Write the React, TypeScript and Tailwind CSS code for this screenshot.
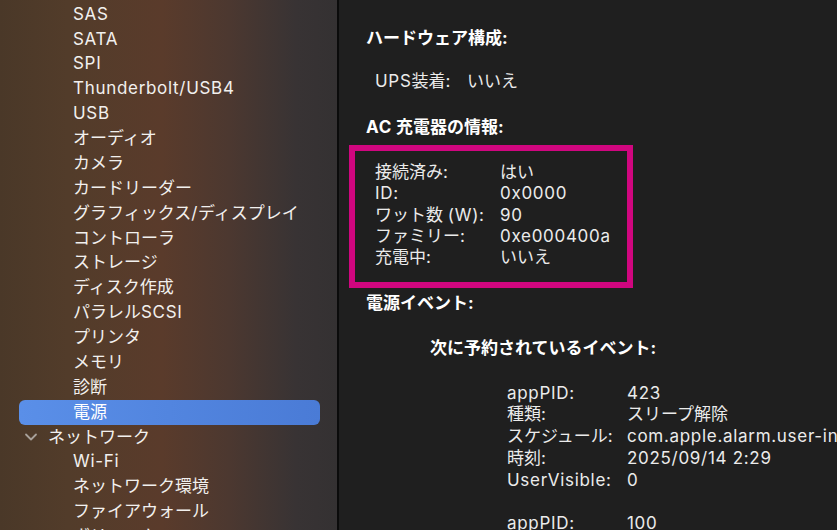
import React from "react";

const sidebarItems = [
  "SAS",
  "SATA",
  "SPI",
  "Thunderbolt/USB4",
  "USB",
  "オーディオ",
  "カメラ",
  "カードリーダー",
  "グラフィックス/ディスプレイ",
  "コントローラ",
  "ストレージ",
  "ディスク作成",
  "パラレルSCSI",
  "プリンタ",
  "メモリ",
  "診断",
];

const networkItems = ["Wi-Fi", "ネットワーク環境", "ファイアウォール", "ボリューム"];

const charger = [
  ["接続済み:", "はい"],
  ["ID:", "0x0000"],
  ["ワット数 (W):", "90"],
  ["ファミリー:", "0xe000400a"],
  ["充電中:", "いいえ"],
];

const event1 = [
  ["appPID:", "423"],
  ["種類:", "スリープ解除"],
  ["スケジュール:", "com.apple.alarm.user-invisible-com.apple.acmonitor"],
  ["時刻:", "2025/09/14 2:29"],
  ["UserVisible:", "0"],
];

// latin runs are set a touch wider so they match the SF widths of the shot
function T({ text }: { text: string }) {
  const parts = text.split(/([\x21-\x7e]+(?: [\x21-\x7e]+)*)/).filter(Boolean);
  return (
    <>
      {parts.map((p, i) =>
        /^[\x21-\x7e]/.test(p) ? (
          <span key={i} className="tracking-[0.7px]">
            {p}
          </span>
        ) : (
          <span key={i}>{p}</span>
        ),
      )}
    </>
  );
}

function Chevron() {
  return (
    <svg width="14" height="10" viewBox="0 0 14 10" className="shrink-0">
      <polyline
        points="2,2.5 7,7.5 12,2.5"
        fill="none"
        stroke="#a8a19a"
        strokeWidth="1.8"
        strokeLinecap="round"
        strokeLinejoin="round"
      />
    </svg>
  );
}

export default function App() {
  return (
    <div className="flex h-[530px] w-[837px] overflow-hidden font-['Inter','Noto_Sans_CJK_JP',sans-serif] text-[17px]">
      {/* sidebar */}
      <aside className="w-[337px] shrink-0 bg-[linear-gradient(90deg,#4a3828_0%,#523c2a_20%,#5a3b2b_48%,#4c3830_68%,#383334_88%,#343132_100%)] pt-[2px] text-[#f2f0ee]">
        {sidebarItems.map((item) => (
          <div key={item} className="flex h-[24.875px] items-center pl-[73px]">
            <T text={item} />
          </div>
        ))}
        <div className="ml-[19px] mr-[17px] flex h-[24.875px] items-center rounded-[6px] bg-[linear-gradient(90deg,#5a8fe8,#4a7bd6)] pl-[54px] text-white">
          電源
        </div>
        <div className="flex h-[24.875px] items-center gap-[10px] pl-[24px]">
          <Chevron />
          <span>ネットワーク</span>
        </div>
        {networkItems.map((item) => (
          <div key={item} className="flex h-[24.875px] items-center pl-[73px]">
            <T text={item} />
          </div>
        ))}
      </aside>

      <div className="w-[2px] shrink-0 bg-[#0b0b0b]" />

      {/* detail pane */}
      <main className="flex-1 overflow-hidden whitespace-nowrap bg-[#1f1f1f] pl-[27px] text-[#ebebeb] leading-[21.5px]">
        <div className="ml-[41px] mt-[-18px] h-[21.5px]">バッテリー情報</div>

        <div className="mt-[24.5px] h-[21.5px] font-bold text-white">ハードウェア構成:</div>
        <div className="mt-[21.5px] flex h-[21.5px] pl-[9px]">
          <span className="w-[92px]">
            <T text="UPS装着:" />
          </span>
          <span>いいえ</span>
        </div>

        <div className="mt-[24.5px] h-[21.5px] font-bold text-white">
          <T text="AC" /> 充電器の情報:
        </div>
        <div className="ml-[-17px] mt-[6.25px] h-[143px] w-[284px] border-[6px] border-[#d0067f] pl-[20px] pt-[11.5px]">
          {charger.map(([k, v]) => (
            <div key={k} className="flex h-[21.25px] items-center">
              <span className="w-[125px]">
                <T text={k} />
              </span>
              <span>
                <T text={v} />
              </span>
            </div>
          ))}
        </div>

        <div className="mt-[5.25px] h-[21.5px] font-bold text-white">電源イベント:</div>
        <div className="ml-[64px] mt-[23.5px] h-[21.5px] font-bold text-white">
          次に予約されているイベント:
        </div>

        <div className="ml-[141px] mt-[23px]">
          {event1.map(([k, v]) => (
            <div key={k} className="flex h-[21.75px] items-center">
              <span className="w-[120px] shrink-0">
                <T text={k} />
              </span>
              <span>
                <T text={v} />
              </span>
            </div>
          ))}
          <div className="mt-[22px] flex h-[21.75px] items-center">
            <span className="w-[120px] shrink-0">
              <T text="appPID:" />
            </span>
            <span>
              <T text="100" />
            </span>
          </div>
        </div>
      </main>
    </div>
  );
}
